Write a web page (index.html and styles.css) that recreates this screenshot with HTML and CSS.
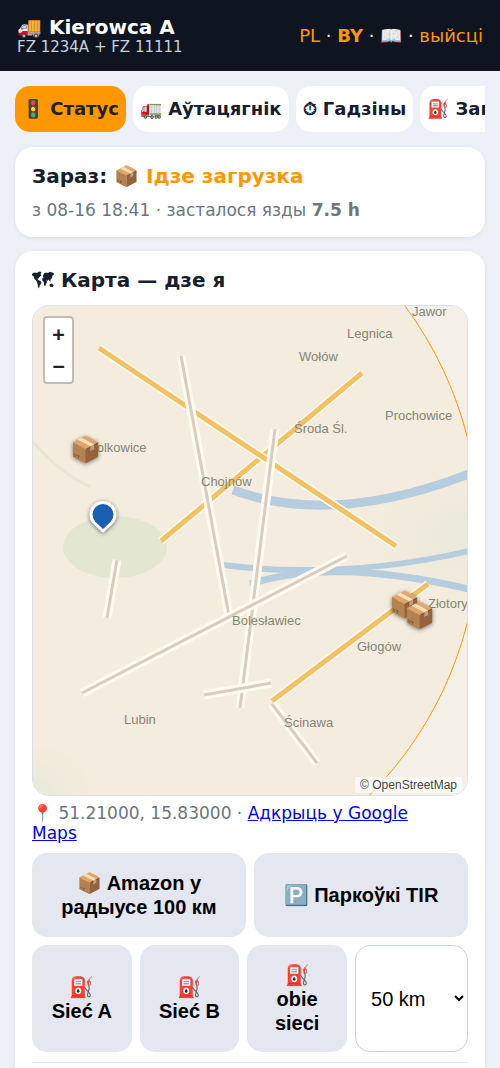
FILE: index.html
```html
<!DOCTYPE html>
<html lang="be">
<head>
    <meta charset="UTF-8">
    <meta name="viewport" content="width=device-width, initial-scale=1.0">
    <title>Kierowca A</title>
    <link rel="stylesheet" href="styles.css">
</head>
<body>

    <header class="topbar">
        <div>
            <div class="driver">🚚 Kierowca A</div>
            <div class="plates">FZ 1234A + FZ 11111</div>
        </div>
        <div class="links">
            <a href="#pl">PL</a> · <a href="#by"><b>BY</b></a> · <a href="#help">📖</a> · <a href="#logout">выйсці</a>
        </div>
    </header>

    <main>
        <nav class="tabs">
            <a class="tab active" href="#status">🚦 Статус</a>
            <a class="tab" href="#truck">🚛 Аўтацягнік</a>
            <a class="tab" href="#hours">⏱ Гадзіны</a>
            <a class="tab" href="#fuel">⛽ Запраўка</a>
        </nav>

        <section class="card">
            <h2>Зараз: <span class="now">📦 Ідзе загрузка</span></h2>
            <div class="muted">з 08-16 18:41 · засталося язды <b>7.5 h</b></div>
        </section>

        <section class="card">
            <h2>
                <svg class="world" width="22" height="18" viewBox="0 0 22 18" aria-hidden="true">
                    <path d="M0 3L2 1.500L5 2L7 .5L9.500 1L8.500 3L9.500 4.500L7.500 6L6.500 7.500L5.500 7.500L6 9L8.500 10L9.500 11.500L8.500 13.500L7.500 15L7 17.500L6 16L5.500 12.500L4.500 10L2.500 8L1.500 5L0 4.500Z"/>
                    <path d="M11 4.500L12 2.500L14 1.500L16 2L18 .8L21.500 2L22 3.500L20.500 4.500L20 7L18.500 8.500L18.500 11L17.500 10L16.500 8.500L15.500 10L14.500 8.500L15 11L14 13L13 15.500L12 14L11.800 11L10.200 9.500L10.500 7L12 6L11 6Z"/>
                    <path d="M17.500 13.500L19.500 12.500L21.500 14L21 16L18 15.800Z"/>
                </svg>
                Карта — дзе я
            </h2>

            <div class="map">
                <svg class="tiles" viewBox="0 0 434 489" preserveAspectRatio="xMidYMid slice">
                    <defs>
                        <radialGradient id="wood">
                            <stop offset="0" stop-color="#e2eddf"/>
                            <stop offset="1" stop-color="#e2eddf" stop-opacity="0"/>
                        </radialGradient>
                    </defs>
                    <rect width="434" height="489" fill="#f4f0e8"/>
                    <ellipse cx="440" cy="230" rx="100" ry="60" fill="url(#wood)" opacity="0.7"/>
                    <ellipse cx="0" cy="489" rx="60" ry="50" fill="url(#wood)" opacity="0.7"/>
                    <ellipse cx="82" cy="241" rx="52" ry="31" fill="#e2ebdb"/>
                    <path d="M0 136Q28 168 58 181" fill="none" stroke="#e6ebdf" stroke-width="3"/>

                    <g class="river">
                        <path d="M200 184Q299 221 436 168" stroke-width="9"/>
                        <path d="M190 259Q309 274 436 245" stroke-width="6"/>
                        <path d="M217 278Q299 251 436 283" stroke-width="7"/>
                    </g>

                    <g class="road main">
                        <path class="edge" d="M128 235L329 67"/><path d="M128 235L329 67"/>
                        <path class="edge" d="M66 42L363 240"/><path d="M66 42L363 240"/>
                        <path class="edge" d="M239 395L395 278"/><path d="M239 395L395 278"/>
                    </g>
                    <g class="road">
                        <path class="edge" d="M148 50L196 310"/><path d="M148 50L196 310"/>
                        <path class="edge" d="M242 123L207 402"/><path d="M242 123L207 402"/>
                        <path class="edge" d="M49 387L314 250"/><path d="M49 387L314 250"/>
                        <path class="edge" d="M171 389L238 377"/><path d="M171 389L238 377"/>
                        <path class="edge" d="M84 254L74 312"/><path d="M84 254L74 312"/>
                        <path class="edge" d="M239 398L284 457"/><path d="M239 398L284 457"/>
                    </g>

                    <g class="towns">
                        <text x="379" y="10">Jawor</text>
                        <text x="314" y="32">Legnica</text>
                        <text x="266" y="55">Wołów</text>
                        <text x="352" y="114">Prochowice</text>
                        <text x="261" y="127">Środa Śl.</text>
                        <text x="55" y="146">Polkowice</text>
                        <text x="168" y="180">Chojnów</text>
                        <text x="199" y="319">Bolesławiec</text>
                        <text x="395" y="302">Złotoryja</text>
                        <text x="324" y="345">Głogów</text>
                        <text x="91" y="418">Lubin</text>
                        <text x="251" y="421">Ścinawa</text>
                    </g>

                    <!-- 100 km range -->
                    <circle class="range" cx="70" cy="224" r="376"/>

                    <g class="boxes">
                        <text x="52" y="152">📦</text>
                        <text x="371" y="307">📦</text>
                        <text x="386" y="318">📦</text>
                    </g>
                    <path class="pin" d="M70 225L61 216.500A12 12 0 1 1 79 216.500Z"/>
                </svg>
                <div class="zoom">
                    <button type="button" aria-label="Zoom in">+</button>
                    <button type="button" aria-label="Zoom out">−</button>
                </div>
                <div class="attribution">© OpenStreetMap</div>
            </div>

            <div class="muted position">📍 51.21000, 15.83000 · <a href="#maps">Адкрыць у Google Maps</a></div>

            <div class="row">
                <button class="btn" type="button">📦 Amazon у радыусе 100 км</button>
                <button class="btn" type="button">🅿️ Паркоўкі TIR</button>
            </div>
            <div class="row fuel">
                <button class="btn" type="button">⛽ Sieć A</button>
                <button class="btn" type="button">⛽ Sieć B</button>
                <button class="btn" type="button">⛽ obie sieci</button>
                <select aria-label="Радыус">
                    <option>50 km</option>
                    <option>100 km</option>
                </select>
            </div>
            <div class="results"></div>
        </section>
    </main>

</body>
</html>
```
FILE: styles.css
```css
* {
    box-sizing: border-box;
}
body {
    margin: 0;
    font-family: "DejaVu Sans", sans-serif;
    font-size: 18px;
    line-height: 21px;
    background: #edf0f6;
    color: #16202c;
}
.topbar {
    display: flex;
    justify-content: space-between;
    align-items: center;
    height: 71px;
    padding: 0 17px;
    background: #0e1420;
    color: #fff;
}
.driver {
    font-size: 20px;
    line-height: 23px;
    font-weight: bold;
}
.plates {
    font-size: 15px;
    line-height: 17px;
    color: #c6d0df;
}
.links a {
    color: #ff9800;
    text-decoration: none;
}
main {
    padding: 15px 15px 0;
}
.tabs {
    display: flex;
    gap: 7px;
    margin-bottom: 15px;
    overflow: hidden;
}
.tab {
    flex: none;
    padding: 12px 7px 13px;
    border-radius: 15px;
    background: #fff;
    color: #16202c;
    font-weight: bold;
    text-decoration: none;
    white-space: nowrap;
}
.tab.active {
    background: #ff9800;
    color: #222;
}
.card {
    margin-bottom: 14px;
    padding: 17px;
    border-radius: 18px;
    background: #fff;
    box-shadow: 0 1px 4px rgba(0, 0, 0, 0.08);
}
h2 {
    margin: 0 0 11px;
    font-size: 20px;
    line-height: 25px;
}
.now {
    color: #ff9800;
}
.world {
    vertical-align: -2px;
    fill: #16202c;
}
.muted {
    font-size: 17px;
    line-height: 20px;
    color: #6c7683;
}
.map {
    position: relative;
    margin-top: 12px;
    border: 1px solid #dde0e6;
    border-radius: 17px;
    overflow: hidden;
}
.tiles {
    display: block;
    width: 100%;
}
.river path {
    fill: none;
    stroke: #b4d0e8;
}
.road path {
    stroke: #d8d0c8;
    stroke-width: 3;
}
.road .edge {
    stroke: #fffefa;
    stroke-width: 9;
}
.road.main path {
    stroke: #f0c468;
    stroke-width: 5;
}
.road.main .edge {
    stroke: #fffefa;
    stroke-width: 8;
}
.towns {
    font-family: "Liberation Sans", Arial, sans-serif;
    font-size: 13px;
    fill: #80857a;
}
.range {
    fill: #ff9800;
    fill-opacity: 0.04;
    stroke: #ff9800;
    stroke-width: 1;
}
.boxes {
    font-size: 25px;
    text-anchor: middle;
    filter: drop-shadow(0 1px 2px rgba(0, 0, 0, 0.5));
}
.pin {
    fill: #1a5fb4;
    stroke: #fff;
    stroke-width: 3;
    stroke-linejoin: round;
    filter: drop-shadow(0 1px 2px rgba(0, 0, 0, 0.5));
}
.zoom {
    position: absolute;
    top: 10px;
    left: 10px;
    width: 31px;
    border: 2px solid rgba(0, 0, 0, 0.2);
    border-radius: 4px;
    background: #fff;
    background-clip: padding-box;
}
.zoom button {
    display: block;
    width: 100%;
    height: 32px;
    padding: 0;
    border: 0;
    background: none;
    color: #222;
    font: bold 20px/32px "DejaVu Sans Mono", monospace;
}
.attribution {
    position: absolute;
    right: 5px;
    bottom: 2px;
    padding: 0 5px;
    background: rgba(255, 255, 255, 0.7);
    color: #444;
    font: 12px/16px "Liberation Sans", Arial, sans-serif;
}
.position {
    margin: 7px 0 10px;
    padding-right: 17px;
}
.position a {
    color: #0000ee;
}
.row {
    display: flex;
    gap: 8px;
    margin-bottom: 8px;
}
.btn {
    flex: 1;
    min-height: 84px;
    padding: 17px 15px;
    border: 0;
    border-radius: 15px;
    background: #e4e7ef;
    color: #000;
    font: bold 20px/24px "Liberation Sans", Arial, sans-serif;
}
.fuel .btn {
    min-height: 107px;
}
.row select {
    width: 113px;
    padding: 0 0 0 11px;
    border: 1px solid #cbd2dd;
    border-radius: 15px;
    background: #fff;
    color: #000;
    font: 20px "Liberation Sans", Arial, sans-serif;
}
.results {
    margin-top: 10px;
    padding-top: 10px;
    border-top: 1px solid #e6e9ef;
}
```
